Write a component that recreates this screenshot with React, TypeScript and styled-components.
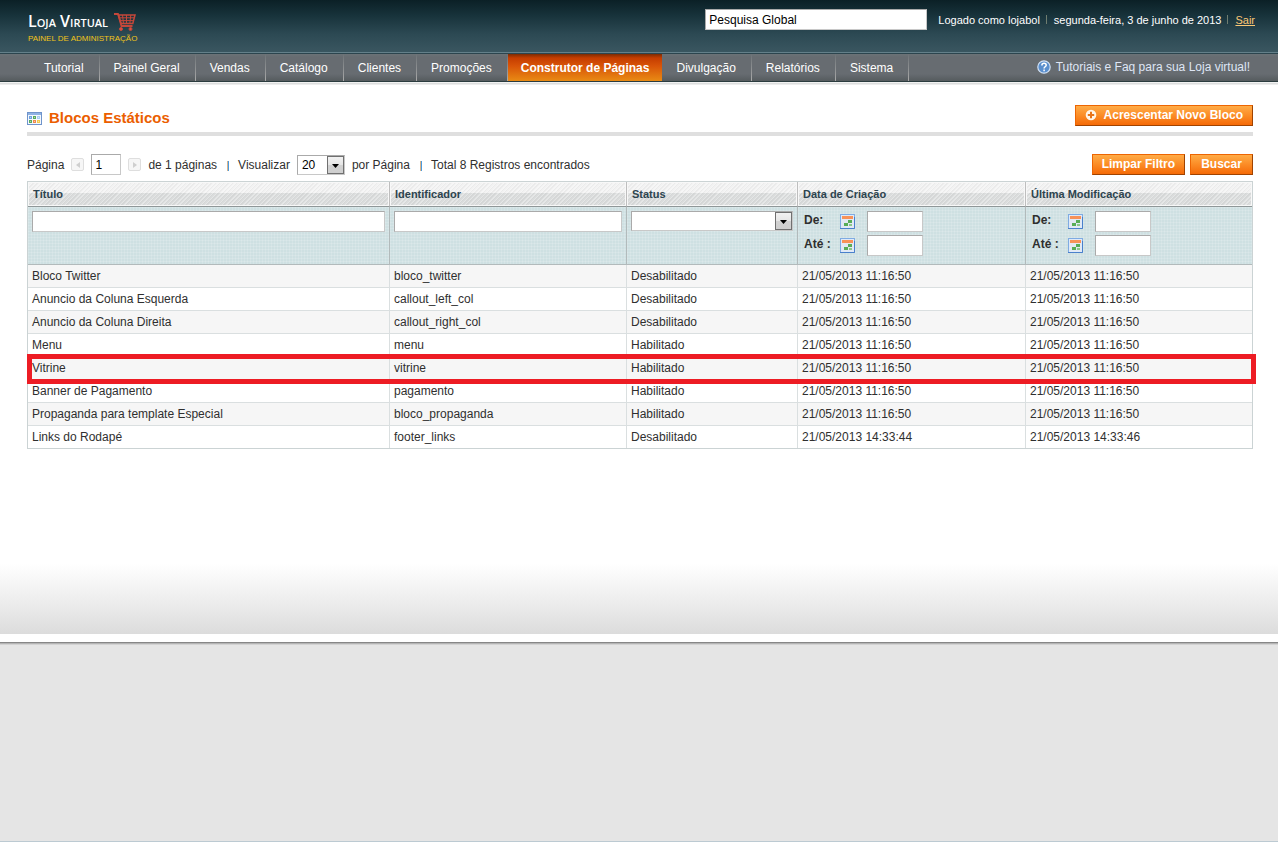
import React from "react";
import styled, { createGlobalStyle } from "styled-components";

const GlobalStyle = createGlobalStyle`
  * { box-sizing: border-box; }
  body {
    margin: 0;
    background: #fff;
    color: #2f2f2f;
    font: 12px/16px "Liberation Sans", Arial, sans-serif;
  }
  input, select, button { font: inherit; border-radius: 0; margin: 0; }
`;

const Page = styled.div`
  display: flex;
  flex-direction: column;
  min-height: 100vh;
`;

const Header = styled.header`
  display: flex;
  justify-content: space-between;
  align-items: flex-start;
  height: 54px;
  padding: 9px 23px 0 28px;
  background: linear-gradient(#0b2026, #17323a 15px, #2c4953 34px, #3a5660 52px);
  border-bottom: 1px solid #2c454e;
  box-shadow: inset 0 -1px 0 #64808a;
`;

const Logo = styled.a`
  display: grid;
  grid-template-columns: 86px auto;
  justify-content: start;
  color: #fff;
  text-decoration: none;
`;

const LogoName = styled.span`
  padding-top: 2px;
  font: 600 16px/21px "Open Sans", "Liberation Sans", sans-serif;
  font-variant: small-caps;
  white-space: nowrap;
`;

const LogoTag = styled.span`
  grid-column: 1 / 3;
  color: #f0c419;
  font-size: 8px;
  line-height: 14px;
`;

const CartIcon = styled.svg`
  display: block;
  width: 22px;
  height: 19px;
  margin-top: 4px;
`;

const HeaderRight = styled.div`
  display: flex;
  align-items: center;
  color: #fff;
  font-size: 11px;
`;

const TextInput = styled.input<{ $width?: string }>`
  width: ${(p) => p.$width ?? "100%"};
  height: 21px;
  padding: 0 3px;
  border: 1px solid #c8c8c8;
  border-top-color: #aaa;
  border-left-color: #aaa;
  background: #fff;
  color: #000;
  font-size: 12px;
`;

const SearchInput = styled(TextInput)`
  margin-right: 11px;
`;

const HeaderSeparator = styled.span`
  width: 1px;
  height: 9px;
  margin: 0 7px 0 6px;
  background: #6f7d70;
`;

const LogoutLink = styled.a`
  color: #fac876;
`;

const NavBar = styled.nav`
  display: flex;
  justify-content: space-between;
  height: 31px;
  padding: 0 28px 0 30px;
  background: linear-gradient(
    #6b7377 0, #676c71 3px, #676c71 20px, #555b5e 27px, #2b3c3f 27px, #2b3c3f 28px,
    #f2f2f2 28px, #f2f2f2 29px, #dcdede 29px, #dcdede 30px, #ededed 30px
  );
`;

const NavList = styled.ul`
  display: flex;
  margin: 0;
  padding: 0;
  list-style: none;
`;

const NavItem = styled.li<{ $active?: boolean }>`
  height: 27px;
  padding-right: ${(p) => (p.$active ? "0" : "1px")};
  background: linear-gradient(#6c7276, #aaa) right / 1px 100% no-repeat;
`;

const NavLink = styled.a<{ $active?: boolean }>`
  display: block;
  height: 27px;
  padding: ${(p) => (p.$active ? "0 13px" : "0 15px 0 14px")};
  background: ${(p) =>
    p.$active ? "linear-gradient(#7c2c04 0, #c53d00 4px, #d85408 12px, #e98b14 27px)" : "none"};
  color: #fff;
  font-weight: ${(p) => (p.$active ? "bold" : "normal")};
  line-height: 29px;
  text-decoration: none;
`;

const HelpLink = styled.a`
  display: flex;
  align-items: center;
  gap: 5px;
  height: 26px;
  color: #dfe6f5;
  text-decoration: none;
`;

const Main = styled.main`
  padding: 20px 25px 185px 27px;
  background: linear-gradient(#fff, #e9e9e9 45px, #dcdcdc 70px) bottom / 100% 70px no-repeat;
`;

const TitleBar = styled.div`
  display: flex;
  justify-content: space-between;
  align-items: flex-start;
  padding-bottom: 5px;
  border-bottom: 4px solid #dfdfdf;
`;

const Title = styled.h1`
  display: flex;
  align-items: center;
  gap: 7px;
  margin: 0;
  padding-top: 4px;
  color: #eb5e00;
  font-size: 15px;
  line-height: 18px;
`;

const OrangeButton = styled.button`
  display: inline-flex;
  align-items: center;
  justify-content: center;
  gap: 7px;
  min-width: 63px;
  height: 21px;
  padding: 0 9px 1px;
  border: 1px solid;
  border-color: #ed6502 #a04300 #a04300 #ed6502;
  background: linear-gradient(#ffac47, #fb8a24 10px, #f56a07);
  color: #fff;
  font-weight: bold;
  cursor: pointer;
`;

const Toolbar = styled.div`
  display: flex;
  justify-content: space-between;
  padding: 18px 0 6px;
`;

const Pager = styled.div`
  display: flex;
  align-items: center;
  gap: 7px;
`;

const PagerSeparator = styled.span`
  width: 2px;
  height: 10px;
  margin: 2px 2px 0 3px;
  background: linear-gradient(90deg, #d9b48c 50%, #4a9be0 50%);
`;

const PageArrow = styled.button`
  display: flex;
  align-items: center;
  justify-content: center;
  width: 13px;
  height: 13px;
  padding: 0;
  border: 1px solid #dedede;
  border-radius: 2px;
  background: #f6f6f6;
`;

const ButtonGroup = styled.div`
  display: flex;
  gap: 5px;
`;

const SelectBox = styled.div<{ $width?: string }>`
  position: relative;
  width: ${(p) => p.$width ?? "100%"};
  height: 20px;
`;

const Select = styled.select`
  appearance: none;
  display: block;
  width: 100%;
  height: 20px;
  padding: 0 20px 0 4px;
  border: 1px solid #c8c8c8;
  border-top-color: #aaa;
  border-left-color: #aaa;
  background: #fff;
  color: #000;
`;

const SelectArrow = styled.span`
  position: absolute;
  top: 1px;
  right: 1px;
  bottom: 1px;
  display: flex;
  align-items: center;
  justify-content: center;
  width: 17px;
  padding-top: 2px;
  border: 1px solid #707070;
  background: linear-gradient(#f2f2f2, #e6e6e6 50%, #d2d2d2 50%, #cfcfcf);
  pointer-events: none;
`;

const Grid = styled.table`
  width: 100%;
  table-layout: fixed;
  border: 1px solid #cbd3d4;
  border-spacing: 0;
`;

const Col = styled.col<{ $width?: string }>`
  width: ${(p) => p.$width ?? "auto"};
`;

const HeadCell = styled.th`
  height: 25px;
  padding: 0 5px;
  border-right: 1px solid #bebebe;
  border-bottom: 1px solid #8f9798;
  background:
    repeating-linear-gradient(135deg, rgba(255, 255, 255, 0.3) 0 1px, rgba(150, 150, 150, 0.08) 1px 2px, transparent 2px 3px),
    linear-gradient(#f2f2f2 11px, #dadcdc 11px);
  box-shadow: inset 0 0 0 1px #f8f8f8;
  color: #2d444f;
  font-size: 11px;
  text-align: left;
  &:last-child { border-right: 0; }
`;

const FilterCell = styled.td`
  height: 58px;
  padding: 4px;
  border-right: 1px solid #b2babb;
  border-bottom: 1px solid #b2babb;
  background:
    repeating-linear-gradient(rgba(255, 255, 255, 0.14) 0 1px, transparent 1px 3px),
    repeating-linear-gradient(90deg, rgba(255, 255, 255, 0.14) 0 1px, transparent 1px 3px),
    #cee0e2;
  vertical-align: top;
  &:last-child { border-right: 0; }
`;

const DateRange = styled.div`
  display: grid;
  grid-template-columns: 29px 26px 56px;
  gap: 3px 4px;
  padding-left: 2px;
`;

const DateLabel = styled.label`
  padding-top: 1px;
  font-weight: bold;
`;

const CalendarButton = styled.button`
  display: flex;
  align-items: center;
  justify-content: flex-end;
  width: 18px;
  height: 21px;
  padding: 0;
  border: 0;
  background: none;
`;

const Row = styled.tr<{ $highlighted: boolean }>`
  position: relative;
  z-index: ${(p) => (p.$highlighted ? 1 : "auto")};
  &:nth-child(odd) { background: #f6f6f6; }
  td:first-child::after {
    content: ${(p) => (p.$highlighted ? '""' : "none")};
    position: absolute;
    z-index: 1;
    inset: -3px -4px -4px -1px;
    border: 5px solid #ed1c24;
    pointer-events: none;
  }
`;

const Cell = styled.td`
  height: 23px;
  padding: 0 4px;
  border-right: 1px solid #dadfe0;
  border-bottom: 1px solid #dadfe0;
  &:last-child { border-right: 0; }
  tr:last-child & { border-bottom: 0; height: 22px; }
`;

const Footer = styled.footer`
  flex: 1;
  margin-top: 8px;
  border-bottom: 1px solid #bccad2;
  background: linear-gradient(#868686 1px, #b4b4b4 1px, #b4b4b4 2px, #d2d2d2 2px, #d2d2d2 3px, #e5e5e5 3px);
`;

const menu = [
  "Tutorial",
  "Painel Geral",
  "Vendas",
  "Catálogo",
  "Clientes",
  "Promoções",
  "Construtor de Páginas",
  "Divulgação",
  "Relatórios",
  "Sistema",
];
const activeMenu = "Construtor de Páginas";

const columns = [
  { label: "Título" },
  { label: "Identificador", width: "237px" },
  { label: "Status", width: "171px" },
  { label: "Data de Criação", width: "228px" },
  { label: "Última Modificação", width: "226px" },
];

const blocks = [
  ["Bloco Twitter", "bloco_twitter", "Desabilitado", "21/05/2013 11:16:50", "21/05/2013 11:16:50"],
  ["Anuncio da Coluna Esquerda", "callout_left_col", "Desabilitado", "21/05/2013 11:16:50", "21/05/2013 11:16:50"],
  ["Anuncio da Coluna Direita", "callout_right_col", "Desabilitado", "21/05/2013 11:16:50", "21/05/2013 11:16:50"],
  ["Menu", "menu", "Habilitado", "21/05/2013 11:16:50", "21/05/2013 11:16:50"],
  ["Vitrine", "vitrine", "Habilitado", "21/05/2013 11:16:50", "21/05/2013 11:16:50"],
  ["Banner de Pagamento", "pagamento", "Habilitado", "21/05/2013 11:16:50", "21/05/2013 11:16:50"],
  ["Propaganda para template Especial", "bloco_propaganda", "Habilitado", "21/05/2013 11:16:50", "21/05/2013 11:16:50"],
  ["Links do Rodapé", "footer_links", "Desabilitado", "21/05/2013 14:33:44", "21/05/2013 14:33:46"],
];

const Cart = () => (
  <CartIcon viewBox="0 0 22 19" fill="none" stroke="#c4473a" aria-hidden="true">
    <path d="M0 1h4l3.5 12h11" strokeWidth="1.8" />
    <path d="M4.5 2h16.5l-2.2 8.5H7z" strokeWidth="1.5" />
    <path d="M5.5 4.8h15M6.2 7.6h13.5M8.5 2l1 8.5M12.5 2v8.5M16.8 2l-1 8.5" />
    <circle cx="7" cy="16" r="1.5" fill="#e0503f" />
    <circle cx="16.5" cy="16" r="1.5" fill="#e0503f" />
  </CartIcon>
);

const HelpIcon = () => (
  <svg width="14" height="14" viewBox="0 0 14 14" aria-hidden="true">
    <circle cx="7" cy="7" r="6.2" fill="#5a8fce" stroke="#d3e2f5" strokeWidth="1.2" />
    <path d="M4.9 5.4c0-2.9 4.3-2.7 4.3-.2 0 1.5-2.1 1.6-2.1 3.2M7.1 9.6v1.6" fill="none" stroke="#fff" strokeWidth="1.5" />
  </svg>
);

const GridIcon = () => (
  <svg width="15" height="13" viewBox="0 0 15 13" aria-hidden="true">
    <rect x="0.5" y="0.5" width="14" height="12" fill="#f4f8fd" stroke="#6f94cb" />
    <rect x="1" y="1" width="13" height="2" fill="#8fb2e3" />
    <rect x="2" y="4" width="3" height="3" fill="#6fa3e0" />
    <rect x="6" y="4" width="3" height="3" fill="#59ab5c" />
    <rect x="10" y="4" width="3" height="3" fill="#a9cdf2" />
    <rect x="2" y="8" width="3" height="3" fill="#59ab5c" />
    <rect x="6" y="8" width="3" height="3" fill="#f08a4b" />
    <rect x="10" y="8" width="3" height="3" fill="#f2c94f" />
    <path d="M3 5.5h1M7 5.5h1M11 5.5h1M3 9.5h1M7 9.5h1M11 9.5h1" stroke="#fff" strokeOpacity="0.5" />
  </svg>
);

const PlusIcon = () => (
  <svg width="12" height="12" viewBox="0 0 12 12" aria-hidden="true">
    <circle cx="6" cy="6" r="5.3" fill="#fff5e8" />
    <path d="M6 2.8v6.4M2.8 6h6.4" stroke="#e8741a" strokeWidth="2" />
  </svg>
);

const CalendarIcon = () => (
  <svg width="15" height="15" viewBox="0 0 15 15" fill="none" aria-hidden="true">
    <rect x="0.5" y="0.5" width="14" height="14" fill="#dfe9f8" stroke="#7fabe2" />
    <path d="M0 14.5h14.5V3" stroke="#4a80cb" />
    <rect x="2" y="2" width="11" height="11" fill="#e3e9f4" />
    <rect x="2" y="2" width="11" height="3" fill="#f79259" />
    <rect x="8" y="6" width="4" height="3" fill="#58ad57" />
    <rect x="4" y="9" width="4" height="3" fill="#58ad57" />
    <rect x="9" y="10" width="3" height="2" fill="#8cc78b" />
  </svg>
);

const Caret = () => (
  <SelectArrow aria-hidden="true">
    <svg width="7" height="4" viewBox="0 0 7 4">
      <path d="M0 0h7L3.5 4z" fill="#000" />
    </svg>
  </SelectArrow>
);

const DateFilter = ({ id }: { id: string }) => (
  <DateRange>
    <DateLabel htmlFor={`${id}-from`}>De:</DateLabel>
    <CalendarButton type="button" aria-label="Selecionar data inicial"><CalendarIcon /></CalendarButton>
    <TextInput id={`${id}-from`} />
    <DateLabel htmlFor={`${id}-to`}>Até :</DateLabel>
    <CalendarButton type="button" aria-label="Selecionar data final"><CalendarIcon /></CalendarButton>
    <TextInput id={`${id}-to`} />
  </DateRange>
);

export default function App() {
  return (
    <Page>
      <GlobalStyle />
      <Header>
        <Logo href="#">
          <LogoName>Loja Virtual</LogoName>
          <Cart />
          <LogoTag>PAINEL DE ADMINISTRAÇÃO</LogoTag>
        </Logo>
        <HeaderRight>
          <SearchInput $width="222px" aria-label="Pesquisa Global" defaultValue="Pesquisa Global" />
          <span>Logado como lojabol</span>
          <HeaderSeparator />
          <span>segunda-feira, 3 de junho de 2013</span>
          <HeaderSeparator />
          <LogoutLink href="#">Sair</LogoutLink>
        </HeaderRight>
      </Header>
      <NavBar>
        <NavList>
          {menu.map((item) => (
            <NavItem key={item} $active={item === activeMenu}>
              <NavLink href="#" $active={item === activeMenu}>{item}</NavLink>
            </NavItem>
          ))}
        </NavList>
        <HelpLink href="#"><HelpIcon />Tutoriais e Faq para sua Loja virtual!</HelpLink>
      </NavBar>
      <Main>
        <TitleBar>
          <Title><GridIcon />Blocos Estáticos</Title>
          <OrangeButton type="button"><PlusIcon />Acrescentar Novo Bloco</OrangeButton>
        </TitleBar>
        <Toolbar>
          <Pager>
            <label htmlFor="page">Página</label>
            <PageArrow type="button" aria-label="Página anterior">
              <svg width="4" height="6" viewBox="0 0 4 6"><path d="M4 0v6L0 3z" fill="#cfcfcf" /></svg>
            </PageArrow>
            <TextInput id="page" $width="30px" defaultValue="1" />
            <PageArrow type="button" aria-label="Próxima página">
              <svg width="4" height="6" viewBox="0 0 4 6"><path d="M0 0v6l4-3z" fill="#cfcfcf" /></svg>
            </PageArrow>
            <span>de 1 páginas</span>
            <PagerSeparator />
            <label htmlFor="limit">Visualizar</label>
            <SelectBox $width="48px">
              <Select id="limit"><option>20</option></Select>
              <Caret />
            </SelectBox>
            <span>por Página</span>
            <PagerSeparator />
            <span>Total 8 Registros encontrados</span>
          </Pager>
          <ButtonGroup>
            <OrangeButton type="button">Limpar Filtro</OrangeButton>
            <OrangeButton type="button">Buscar</OrangeButton>
          </ButtonGroup>
        </Toolbar>
        <Grid>
          <colgroup>
            {columns.map((c) => <Col key={c.label} $width={c.width} />)}
          </colgroup>
          <thead>
            <tr>{columns.map((c) => <HeadCell key={c.label}>{c.label}</HeadCell>)}</tr>
            <tr>
              <FilterCell><TextInput aria-label="Título" /></FilterCell>
              <FilterCell><TextInput aria-label="Identificador" /></FilterCell>
              <FilterCell>
                <SelectBox>
                  <Select aria-label="Status"><option></option></Select>
                  <Caret />
                </SelectBox>
              </FilterCell>
              <FilterCell><DateFilter id="created" /></FilterCell>
              <FilterCell><DateFilter id="modified" /></FilterCell>
            </tr>
          </thead>
          <tbody>
            {blocks.map((row) => (
              <Row key={row[1]} $highlighted={row[1] === "vitrine"}>
                {row.map((value, i) => <Cell key={i}>{value}</Cell>)}
              </Row>
            ))}
          </tbody>
        </Grid>
      </Main>
      <Footer />
    </Page>
  );
}
